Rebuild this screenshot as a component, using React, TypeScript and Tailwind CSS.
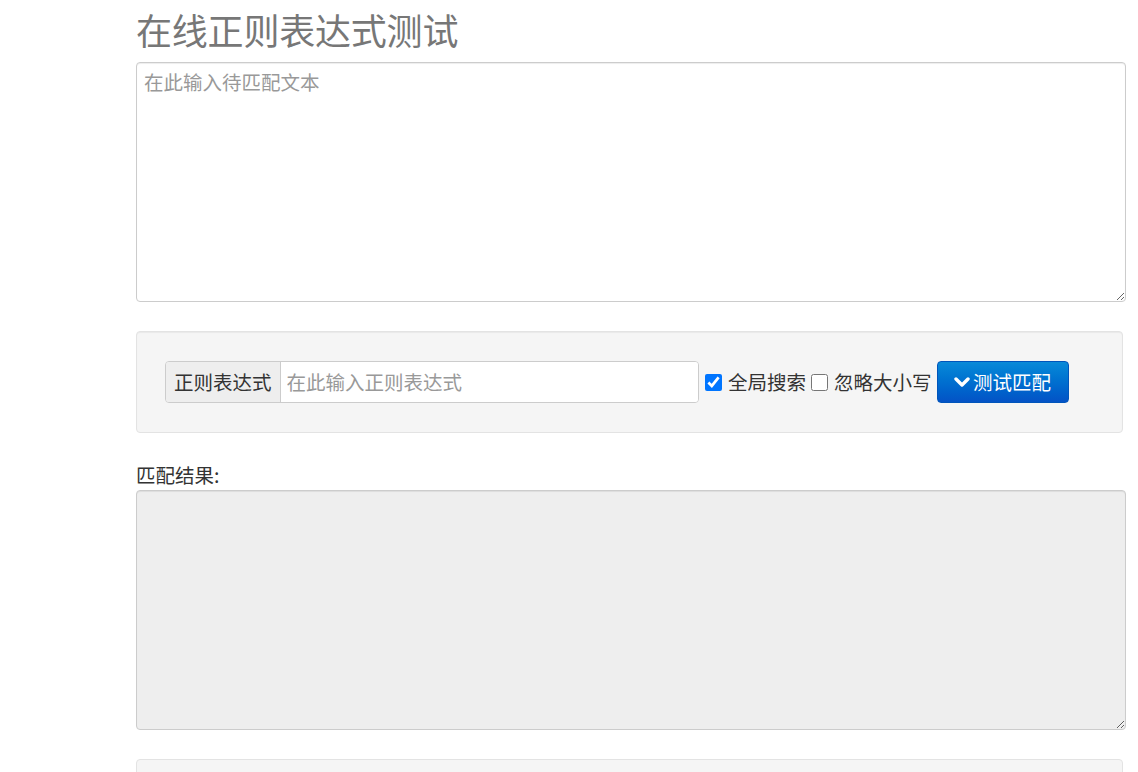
import React from "react";

export default function App() {
  const font = { fontFamily: '"Noto Sans CJK SC", "Noto Sans", sans-serif' };
  return (
    <div className="h-[772px] overflow-hidden bg-white" style={font}>
      <div className="ml-[136px] w-[990px] pt-[9px] text-[#333]">
        <h1 className="text-[36px] leading-[40px] font-normal text-[#777] mb-[13px] tracking-[-0.2px]">
          在线正则表达式测试
        </h1>
        <textarea
          className="block w-full h-[240px] border border-[#ccc] rounded-[4px] px-[7px] py-[5px] text-[19.5px] leading-[28px] placeholder:text-[#999] outline-none shadow-[inset_0_1px_1px_rgba(0,0,0,0.075)]"
          placeholder="在此输入待匹配文本"
        />
        <div className="mt-[29px] w-[987px] h-[102px] bg-[#f5f5f5] border border-[#e3e3e3] rounded-[4px] pl-[28px] pt-[29px] shadow-[inset_0_1px_1px_rgba(0,0,0,0.05)]">
          <div className="flex items-center">
            <div className="flex h-[42px] w-[534px] border border-[#ccc] rounded-[4px] overflow-hidden">
              <span className="flex items-center px-[8px] bg-[#eee] border-r border-[#ccc] text-[19.5px] text-[#333] whitespace-nowrap">
                正则表达式
              </span>
              <input
                className="flex-1 px-[6px] text-[19.5px] bg-white outline-none placeholder:text-[#999]"
                placeholder="在此输入正则表达式"
              />
            </div>
            <label className="flex items-center ml-[6px] text-[19.5px] text-[#333]">
              <input type="checkbox" defaultChecked className="w-[17px] h-[17px] m-0 mr-[6px]" />
              全局搜索
            </label>
            <label className="flex items-center ml-[5px] text-[19.5px] text-[#333]">
              <input type="checkbox" className="w-[17px] h-[17px] m-0 mr-[6px]" />
              忽略大小写
            </label>
            <button className="ml-[5px] h-[42px] w-[132px] flex items-center justify-center rounded-[4px] border border-[#0055bb] bg-gradient-to-b from-[#0a8ad8] to-[#0452c6] text-white text-[19.5px]">
              <svg width="16" height="12" viewBox="0 0 16 12" className="mr-[3px]">
                <path d="M2 3 L8 9 L14 3" stroke="white" strokeWidth="3.4" fill="none" strokeLinecap="round" strokeLinejoin="round" />
              </svg>
              测试匹配
            </button>
          </div>
        </div>
        <div className="mt-[30px] text-[19.5px] leading-[24px] text-[#333] mb-[3px]">匹配结果:</div>
        <textarea
          readOnly
          className="block w-full h-[240px] border border-[#ccc] rounded-[4px] bg-[#eee] outline-none shadow-[inset_0_1px_1px_rgba(0,0,0,0.075)]"
        />
        <div className="mt-[29px] w-[987px] h-[100px] bg-[#f5f5f5] border border-[#e3e3e3] rounded-[4px]" />
      </div>
    </div>
  );
}
